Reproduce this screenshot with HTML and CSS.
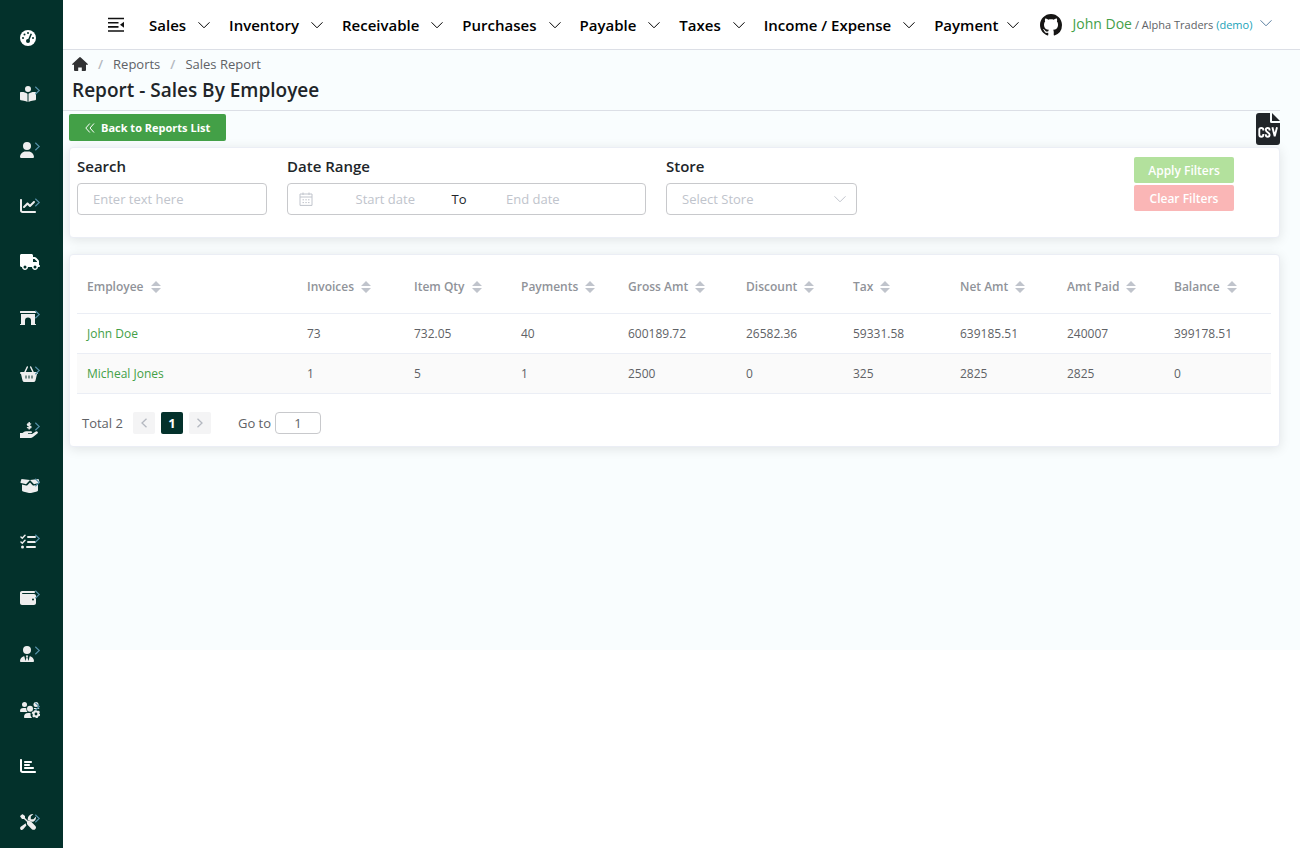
FILE: index.html
```
<!DOCTYPE html>
<html lang="en">
<head>
<meta charset="utf-8">
<title>Report - Sales By Employee</title>
<link rel="stylesheet" href="styles.css">
</head>
<body>
<svg class="defs" aria-hidden="true">
  <symbol id="down" viewBox="0 0 12 12"><path d="M.5 3.3 6 8.8l5.500-5.500" fill="none" stroke="currentColor"/></symbol>
  <symbol id="next" viewBox="0 0 8 10"><path d="M1.500.7 6 5 1.500 9.300" fill="none" stroke="currentColor" stroke-width="1.300"/></symbol>
  <symbol id="sort" viewBox="0 0 10 12"><path d="M5 0l5 5H0zM5 12l5-5H0z" fill="currentColor"/></symbol>
</svg>
<div class="app">
  <nav class="sidebar" aria-label="Modules">
    <a class="side-item" href="#" aria-label="Dashboard"><svg class="glyph" viewBox="0 0 16 16"><circle cx="8" cy="8" r="8" fill="currentColor"/><g class="cut"><circle cx="8" cy="3" r="1"/><circle cx="4.500" cy="4.500" r="1"/><circle cx="3" cy="8" r="1"/><circle cx="13" cy="8" r="1"/><circle cx="8" cy="11" r="2"/><path d="m10.600 3.500 1.400.6-3 7-1.400-.6z"/></g></svg></a>
    <a class="side-item" href="#" aria-label="Accounts"><svg class="glyph" viewBox="0 0 512 512"><path fill="currentColor" d="M160 96a96 96 0 1 1 192 0A96 96 0 1 1 160 96zm80 152V512l-48.400-24.200c-20.900-10.400-43.500-17-66.800-19.300l-96-9.600C12.500 457.200 0 443.500 0 427V224c0-17.700 14.300-32 32-32H62.300c63.600 0 125.600 19.600 177.700 56zm32 264V248c52.100-36.400 114.100-56 177.700-56H480c17.700 0 32 14.300 32 32V427c0 16.400-12.500 30.200-28.800 31.800l-96 9.600c-23.200 2.300-45.900 8.900-66.800 19.300L272 512z"/></svg><svg class="more"><use href="#next"/></svg></a>
    <a class="side-item" href="#" aria-label="Customers"><svg class="glyph narrow" viewBox="0 0 448 512"><path fill="currentColor" d="M224 256A128 128 0 1 0 224 0a128 128 0 1 0 0 256zm-45.700 48C79.800 304 0 383.800 0 482.300C0 498.700 13.300 512 29.700 512H418.300c16.400 0 29.700-13.300 29.700-29.700C448 383.800 368.200 304 269.700 304H178.300z"/></svg><svg class="more"><use href="#next"/></svg></a>
    <a class="side-item" href="#" aria-label="Sales"><svg class="glyph" viewBox="0 0 512 512"><path fill="currentColor" d="M64 64c0-17.700-14.300-32-32-32S0 46.300 0 64V400c0 44.200 35.800 80 80 80H480c17.700 0 32-14.300 32-32s-14.300-32-32-32H80c-8.800 0-16-7.200-16-16V64zm406.600 86.600c12.500-12.500 12.500-32.800 0-45.300s-32.800-12.500-45.300 0L320 210.700l-57.400-57.400c-12.500-12.500-32.800-12.500-45.300 0l-112 112c-12.500 12.500-12.500 32.800 0 45.300s32.800 12.500 45.300 0L240 221.300l57.400 57.400c12.500 12.500 32.800 12.500 45.300 0l128-128z"/></svg><svg class="more"><use href="#next"/></svg></a>
    <a class="side-item" href="#" aria-label="Suppliers"><svg class="glyph wide" viewBox="0 0 640 512"><path fill="currentColor" d="M48 0C21.500 0 0 21.500 0 48V368c0 26.500 21.500 48 48 48H64c0 53 43 96 96 96s96-43 96-96H384c0 53 43 96 96 96s96-43 96-96h32c17.700 0 32-14.300 32-32s-14.300-32-32-32V237.300c0-17-6.700-33.300-18.700-45.300L512 114.700c-12-12-28.300-18.700-45.300-18.700H416V48c0-26.500-21.500-48-48-48H48zM416 160h50.700L544 237.300V256H416V160zM112 416a48 48 0 1 1 96 0 48 48 0 1 1 -96 0zm368-48a48 48 0 1 1 0 96 48 48 0 1 1 0-96z"/></svg></a>
    <a class="side-item" href="#" aria-label="Stores"><svg class="glyph" viewBox="0 0 16 16"><path fill="currentColor" d="M0 1.500Q0 1 .5 1h15q.5 0 .5.5v1q0 .5-.5.500H.5Q0 3 0 2.500zM1 4h14v10h.5q.5 0 .5.500v.5H11v-4.500a3 3 0 0 0-6 0V15H0v-.5q0-.5.500-.5H1z"/></svg><svg class="more"><use href="#next"/></svg></a>
    <a class="side-item" href="#" aria-label="Purchases"><svg class="glyph basket" viewBox="0 0 18 16"><path d="M4.500 7 7.300 1M13.500 7l-2.800-6" fill="none" stroke="currentColor" stroke-width="1.500" stroke-linecap="round"/><path fill="currentColor" d="M1 6h16q1 0 1 1t-1 1l-1.500 6.500Q15 16 13.500 16h-9Q3 16 2.500 14.500L1 8Q0 8 0 7t1-1z"/><path class="cut-line" d="M6 9.500v3M9 9.500v3M12 9.500v3"/></svg><svg class="more"><use href="#next"/></svg></a>
    <a class="side-item" href="#" aria-label="Payments"><svg class="glyph basket" viewBox="0 0 18 16"><path fill="none" stroke="currentColor" stroke-width="1.400" d="M11 2.300C9.800 1.300 7.400 1.300 7.400 2.600 7.400 4.200 11 3.200 11 4.900c0 1.400-2.600 1.400-3.900.3M9.200 0v7.500"/><path fill="currentColor" d="M0 11h2.500l1.700-1.200Q5 9.300 6 9.300h5q1 0 1 1t-1 1H8v.7h4l3.800-2.400q1-.6 1.800.1.700.9-.2 1.700L13 15q-1.200 1-2.500 1H0z"/></svg><svg class="more"><use href="#next"/></svg></a>
    <a class="side-item" href="#" aria-label="Inventory"><svg class="glyph wide" viewBox="0 0 20 16"><path fill="currentColor" d="M1.500 1 10 2l8.500-1 1 3q.3.700-.4.900l-4.500 1.200q-.7.200-1.100-.4L10 2 6.500 5.700q-.4.600-1.100.4L.9 4.900Q.2 4.700.5 4zM2 6.500l4 1q1 .2 1.600-.5L10 4.500 12.400 7q.6.700 1.600.5l4-1v5.800q0 1-1 1.200l-6 1.400q-1 .2-2 0l-6-1.400q-1-.2-1-1.200z"/></svg><svg class="more"><use href="#next"/></svg></a>
    <a class="side-item" href="#" aria-label="Tasks"><svg class="glyph" viewBox="0 0 16 16"><path d="m1 3 1.300 1.200L5 1.300M1 8l1.300 1.200L5 6.300" fill="none" stroke="currentColor" stroke-width="1.500" stroke-linecap="round"/><circle cx="2.500" cy="13" r="1.500" fill="currentColor"/><path d="M8 3h7M8 8h7M7 13h8" stroke="currentColor" stroke-width="2" stroke-linecap="round"/></svg><svg class="more"><use href="#next"/></svg></a>
    <a class="side-item" href="#" aria-label="Expenses"><svg class="glyph" viewBox="0 0 512 512"><path fill="currentColor" d="M64 32C28.700 32 0 60.700 0 96V416c0 35.300 28.700 64 64 64H448c35.300 0 64-28.700 64-64V192c0-35.300-28.700-64-64-64H80c-8.800 0-16-7.200-16-16s7.200-16 16-16H448c17.700 0 32-14.300 32-32s-14.300-32-32-32H64zM416 272a32 32 0 1 1 0 64 32 32 0 1 1 0-64z"/></svg><svg class="more"><use href="#next"/></svg></a>
    <a class="side-item" href="#" aria-label="Employees"><svg class="glyph narrow" viewBox="0 0 448 512"><path fill="currentColor" d="M96 128a128 128 0 1 0 256 0A128 128 0 1 0 96 128zm94.500 200.200l18.600 31L175.800 483.100l-36-146.900c-2-8.100-9.800-13.400-17.900-11.300C51.900 342.400 0 405.800 0 481.300c0 17 13.800 30.700 30.700 30.700H417.300c17 0 30.700-13.800 30.700-30.700c0-75.500-51.900-138.900-121.900-156.400c-8.100-2-15.900 3.300-17.900 11.300l-36 146.900L238.900 359.200l18.600-31c6.400-10.700-1.300-24.200-13.700-24.200H204.300c-12.400 0-20.100 13.600-13.700 24.200z"/></svg><svg class="more"><use href="#next"/></svg></a>
    <a class="side-item" href="#" aria-label="User settings"><svg class="glyph wide" viewBox="0 0 20 16"><g fill="currentColor"><circle cx="4.500" cy="2.500" r="2.500"/><circle cx="16" cy="2.500" r="2.500"/><circle cx="10" cy="6.800" r="3"/><path d="M0 9.300Q0 6 3.300 6h2.200l.8.300q-.2 2 1.200 3.700H.7Q0 10 0 9.300zM4 15.200Q4 11 8.200 11h2.300q-.5 2.500 1.500 5H4.800Q4 16 4 15.200zM14 6h3.500Q19 6 19.700 7h-6z"/><circle cx="16" cy="12" r="3.400"/></g><circle cx="16" cy="12" r="3.600" fill="none" stroke="currentColor" stroke-width="1.400" stroke-dasharray="1.900 1.870"/><circle class="cut" cx="16" cy="12" r="1.400"/></svg><svg class="more"><use href="#next"/></svg></a>
    <a class="side-item" href="#" aria-label="Reports"><svg class="glyph" viewBox="0 0 512 512"><path fill="currentColor" d="M32 32c17.700 0 32 14.300 32 32V400c0 8.800 7.200 16 16 16H480c17.700 0 32 14.300 32 32s-14.300 32-32 32H80c-44.200 0-80-35.800-80-80V64C0 46.300 14.300 32 32 32zm96 96c0-17.700 14.300-32 32-32l192 0c17.700 0 32 14.300 32 32s-14.300 32-32 32H160c-17.700 0-32-14.300-32-32zm32 64H288c17.700 0 32 14.300 32 32s-14.300 32-32 32H160c-17.700 0-32-14.300-32-32s14.300-32 32-32zm0 96H416c17.700 0 32 14.300 32 32s-14.300 32-32 32H160c-17.700 0-32-14.300-32-32s14.300-32 32-32z"/></svg></a>
    <a class="side-item" href="#" aria-label="Settings"><svg class="glyph" viewBox="0 0 16 16"><path fill="currentColor" d="M.4 1.800 1.900.4Q2.300 0 2.700.3L5 2v1.900l3.100 3.100q1.600-.6 2.900.6l4.400 4.400q1.200 1.500 0 3t-3.300.4L7.700 11Q6.500 9.600 7.100 8.100L4 5H2L.3 2.700Q0 2.200.4 1.800z"/><path fill="currentColor" d="m13.400 0-2.600 2.600v2.600h2.600L16 2.600q.3 3.500-2.300 4.900-1.200.5-2.200.3-1.800-1.600-3.600-1.400Q7.300 3.500 9 1.700 10.900-.2 13.400 0zM5.800 9.200q-.1 1.300.6 2.400l-3.200 3.600Q1.700 16.500.6 15.400t.1-2.700z"/></svg><svg class="more"><use href="#next"/></svg></a>
  </nav>

  <div class="page">
    <header class="topbar">
      <button class="fold" aria-label="Collapse menu"><svg viewBox="0 0 16 16"><path d="M0 1.500h16M0 5.700h10.500M0 9.900h10.500M0 14h16" stroke="currentColor" stroke-width="1.600"/><path d="M12 7.800 16 4.800v6z" fill="currentColor"/></svg></button>
      <nav class="menu" aria-label="Main">
        <a href="#">Sales<svg><use href="#down"/></svg></a>
        <a href="#">Inventory<svg><use href="#down"/></svg></a>
        <a href="#">Receivable<svg><use href="#down"/></svg></a>
        <a href="#">Purchases<svg><use href="#down"/></svg></a>
        <a href="#">Payable<svg><use href="#down"/></svg></a>
        <a href="#">Taxes<svg><use href="#down"/></svg></a>
        <a href="#">Income / Expense<svg><use href="#down"/></svg></a>
        <a class="tight" href="#">Payment<svg><use href="#down"/></svg></a>
      </nav>
      <a class="github" href="#" aria-label="GitHub"><svg viewBox="0 0 16 16"><path fill="currentColor" d="M8 0C3.580 0 0 3.580 0 8c0 3.540 2.290 6.530 5.470 7.590.4.070.55-.17.55-.38 0-.19-.01-.82-.01-1.490-2.010.37-2.530-.49-2.690-.94-.09-.23-.48-.94-.82-1.130-.28-.15-.68-.52-.01-.53.63-.01 1.080.58 1.230.82.72 1.210 1.870.87 2.330.66.070-.52.280-.87.510-1.070-1.780-.2-3.640-.89-3.640-3.950 0-.87.310-1.590.820-2.150-.08-.2-.36-1.020.080-2.120 0 0 .67-.21 2.200.820.640-.18 1.320-.27 2-.27.680 0 1.360.09 2 .27 1.530-1.040 2.200-.82 2.200-.82.440 1.100.16 1.920.080 2.120.51.56.820 1.270.820 2.150 0 3.070-1.870 3.750-3.650 3.950.29.250.54.730.54 1.480 0 1.070-.01 1.930-.01 2.200 0 .21.150.460.550.380A8.013 8.013 0 0016 8c0-4.420-3.580-8-8-8z"/></svg></a>
      <button class="account"><span class="who">John Doe</span><span class="org">/ Alpha Traders <span class="demo">(demo)</span></span><svg><use href="#down"/></svg></button>
    </header>

    <main class="content">
      <nav class="crumbs" aria-label="Breadcrumb">
        <a class="home" href="#" aria-label="Home"><svg viewBox="0 0 16 14"><path fill="currentColor" d="M7.200.4q.8-.7 1.600 0L15.800 7q.5.800-.4.800H14V13q0 1-1 1H9.800v-3.600H6.200V14H3q-1 0-1-1V7.800H.6Q-.3 7.800.2 7z"/></svg></a>
        <span class="slash">/</span><a href="#">Reports</a><span class="slash">/</span><a href="#">Sales Report</a>
      </nav>
      <h1>Report - Sales By Employee</h1>

      <div class="actions">
        <a class="btn back" href="#"><svg viewBox="0 0 10 10"><path d="M4.800.5.8 5l4 4.500M9 .5 5 5l4 4.500" fill="none" stroke="currentColor"/></svg>Back to Reports List</a>
        <button class="csv" aria-label="Export as CSV"><svg viewBox="0 0 24 32"><path fill="currentColor" d="M3 0h11v8.500q0 1.500 1.500 1.500H24v19q0 3-3 3H3q-3 0-3-3V3q0-3 3-3zM16 0l8 8h-8z"/><path d="M7.300 17.600v-.8q0-1.800-2-1.800t-2 1.800v5q0 1.900 2 1.900t2-1.900v-.7M13.600 17.600v-.6q0-2-1.900-2t-1.900 1.800q0 1.500 1.900 2.500t1.900 2.500q0 1.900-1.900 1.900t-1.900-1.900v-.6M16.400 14.200l2.300 9 2.300-9" fill="none" stroke="#fff" stroke-width="1.900"/></svg></button>
      </div>

      <form class="card filters">
        <div class="field">
          <label for="search">Search</label>
          <input id="search" class="box" type="text" placeholder="Enter text here">
        </div>
        <div class="field">
          <label for="start">Date Range</label>
          <div class="box range">
            <svg viewBox="0 0 14 14"><path d="M1 2h12v11.400H1zM1 5h12M4 .5V3M10 .5V3M3.500 7.800h1.500M6.300 7.800h1.500M9 7.800h1.500M3.500 10.600h1.500M6.300 10.600h1.500M9 10.600h1.500" fill="none" stroke="currentColor"/></svg>
            <input id="start" type="text" placeholder="Start date">
            <span>To</span>
            <input type="text" placeholder="End date" aria-label="End date">
          </div>
        </div>
        <div class="field">
          <label for="store">Store</label>
          <div class="pick"><select id="store" class="box"><option>Select Store</option></select><svg><use href="#down"/></svg></div>
        </div>
        <div class="buttons">
          <button type="button" class="btn apply">Apply Filters</button>
          <button type="button" class="btn clear">Clear Filters</button>
        </div>
      </form>

      <section class="card results">
        <table>
          <colgroup><col class="c-name"><col><col><col><col class="c-gross"><col><col><col><col><col></colgroup>
          <thead><tr>
            <th>Employee<svg><use href="#sort"/></svg></th><th>Invoices<svg><use href="#sort"/></svg></th><th>Item Qty<svg><use href="#sort"/></svg></th><th>Payments<svg><use href="#sort"/></svg></th><th>Gross Amt<svg><use href="#sort"/></svg></th><th>Discount<svg><use href="#sort"/></svg></th><th>Tax<svg><use href="#sort"/></svg></th><th>Net Amt<svg><use href="#sort"/></svg></th><th>Amt Paid<svg><use href="#sort"/></svg></th><th>Balance<svg><use href="#sort"/></svg></th>
          </tr></thead>
          <tbody>
            <tr><td><a href="#">John Doe</a></td><td>73</td><td>732.05</td><td>40</td><td>600189.72</td><td>26582.36</td><td>59331.58</td><td>639185.51</td><td>240007</td><td>399178.51</td></tr>
            <tr><td><a href="#">Micheal Jones</a></td><td>1</td><td>5</td><td>1</td><td>2500</td><td>0</td><td>325</td><td>2825</td><td>2825</td><td>0</td></tr>
          </tbody>
        </table>
        <div class="pager">
          <span class="total">Total 2</span>
          <button class="pg" disabled aria-label="Previous page"><svg class="flip"><use href="#next"/></svg></button>
          <button class="pg current">1</button>
          <button class="pg" disabled aria-label="Next page"><svg><use href="#next"/></svg></button>
          <label for="goto">Go to</label>
          <input id="goto" type="text" value="1">
        </div>
      </section>
    </main>
  </div>
</div>
</body>
</html>
```

FILE: styles.css
```
* { box-sizing: border-box; }
body { margin: 0; background: #fff; color: #212529; font-family: "Open Sans", "Noto Sans", sans-serif; font-size: 12px; }
a { color: inherit; text-decoration: none; }
button, input, select { font: inherit; color: inherit; margin: 0; }
button { border: 0; padding: 0; background: none; cursor: pointer; }
svg { display: block; flex: none; }
.defs { position: absolute; width: 0; height: 0; }

.app { display: flex; height: 100vh; overflow: hidden; }
.sidebar { flex: none; width: 63px; padding-top: 10px; background: #03312b; overflow: hidden; }
.side-item { display: flex; align-items: center; height: 56px; padding-left: 20px; color: #eee; position: relative; }
.side-item:first-child, .side-item:nth-child(5), .side-item:nth-child(14) { color: #fff; }
.glyph { width: 16px; height: 16px; }
.glyph.narrow { width: 14px; }
.glyph.wide { width: 20px; }
.glyph.basket { width: 18px; }
.cut { fill: #03312b; }
.cut-line { stroke: #03312b; stroke-width: 1; }
.more { position: absolute; left: 34px; top: 20px; width: 7px; height: 9px; color: #5590a8; }

.page { flex: 1; min-width: 0; }
.topbar { display: flex; align-items: center; height: 50px; padding-left: 45px; border-bottom: 1px solid #dcdfe6; background: #fff; }
.fold { color: #111; margin-right: 25px; }
.fold svg { width: 16px; height: 16px; }
.menu { display: flex; gap: 19px; font-size: 15px; font-weight: 600; color: #000; white-space: nowrap; }
.menu a { display: flex; align-items: center; gap: 12px; }
.menu a.tight { gap: 8px; }
.menu svg { width: 12px; height: 12px; }
.github { margin-left: 21px; color: #161514; }
.github svg { width: 22px; height: 22px; }
.account { display: flex; align-items: center; margin-left: 11px; white-space: nowrap; font-size: 11px; color: #606266; }
.who { font-size: 14px; color: #43a047; margin-right: 3px; padding-bottom: 3px; }
.demo { color: #17a2b8; }
.account svg { width: 12px; height: 12px; margin-left: 8px; margin-bottom: 3px; color: #5a7fa0; }

.content { min-height: 600px; padding: 4px 20px 20px 6px; background: #f9fdfe; }
.crumbs { display: flex; align-items: center; height: 20px; padding-left: 3px; font-size: 13px; color: #606266; }
.crumbs svg { width: 16px; height: 14px; }
.home { color: #303133; }
.slash { margin: 0 10px; color: #b4b8c0; font-weight: 600; }
h1 { margin: 0 0 0 -6px; padding: 3px 0 6px 9px; font-size: 19px; line-height: 27px; font-weight: 600; border-bottom: 1px solid #dcdfe6; }

.actions { display: flex; justify-content: space-between; padding-top: 2px; height: 36px; }
.btn { display: flex; align-items: center; justify-content: center; color: #fff; font-size: 12px; font-weight: 600; border-radius: 2px; }
.back { height: 27px; margin-top: 1px; padding: 0 16px; gap: 6px; background: #43a047; font-size: 11px; font-weight: 700; }
.back svg { width: 10px; height: 10px; }
.csv { height: 32px; color: #212529; }
.csv svg { width: 24px; height: 32px; }

.card { background: #fff; border: 1px solid #ebeef5; border-radius: 4px; box-shadow: 0 2px 12px rgba(0, 0, 0, .1); }
.filters { display: grid; grid-template-columns: 190fr 359fr 191fr 394fr; gap: 20px; padding: 8px 8px 22px 7px; }
.field { min-width: 0; }
.field label { display: block; height: 27px; line-height: 20px; font-size: 15px; font-weight: 600; }
.box { width: 100%; height: 32px; padding: 0 15px; border: 1px solid #c8c9cc; border-radius: 4px; background: #fff; font-size: 13px; outline: 0; }
input::placeholder { color: #c0c4cc; opacity: 1; }
.range { display: flex; align-items: center; padding: 0 46px 0 11px; }
.range svg { width: 14px; height: 14px; margin-right: 6px; color: #c0c4cc; }
.range input { flex: 1; min-width: 0; border: 0; padding: 0; text-align: center; outline: 0; background: none; }
.pick { display: grid; align-items: center; }
.pick select, .pick svg { grid-area: 1 / 1; }
.pick select { appearance: none; color: #c0c4cc; }
.pick svg { justify-self: end; width: 12px; height: 12px; margin-right: 11px; color: #c0c4cc; pointer-events: none; }
.buttons { display: grid; grid-template-columns: 100px; grid-auto-rows: 26px; gap: 2px; justify-content: end; padding: 1px 37px 0 0; }
.apply { background: #b3e19d; }
.clear { background: #fab6b6; }

.results { margin-top: 16px; padding: 5px 8px 12px 7px; }
table { width: 100%; table-layout: fixed; border-collapse: collapse; font-size: 12px; color: #606266; }
col { width: 107px; }
.c-name { width: 220px; }
.c-gross { width: 118px; }
th, td { height: 40px; padding: 0 10px; text-align: left; white-space: nowrap; border-bottom: 1px solid #ebeef5; }
th { height: 53px; font-size: 12px; font-weight: 600; color: #909399; }
th svg { display: inline-block; vertical-align: -2px; width: 10px; height: 12px; margin-left: 7px; color: #c0c4cc; }
td a { color: #43a047; }
tbody tr:nth-child(even) { background: #fafafa; }
.pager { display: flex; align-items: center; padding: 18px 5px 0; font-size: 13px; color: #606266; }
.pg { display: grid; place-items: center; width: 22px; height: 22px; margin-right: 6px; border-radius: 2px; background: #f4f4f5; color: #b4b8c0; }
.pg svg { width: 8px; height: 10px; }
.flip { transform: scaleX(-1); }
.pg.current { background: #03312b; color: #fff; font-weight: 700; }
.total { margin-right: 10px; }
.pager label { margin: 0 4px 0 21px; }
.pager input { width: 46px; height: 22px; padding: 0; text-align: center; border: 1px solid #c8c9cc; border-radius: 4px; }
```
